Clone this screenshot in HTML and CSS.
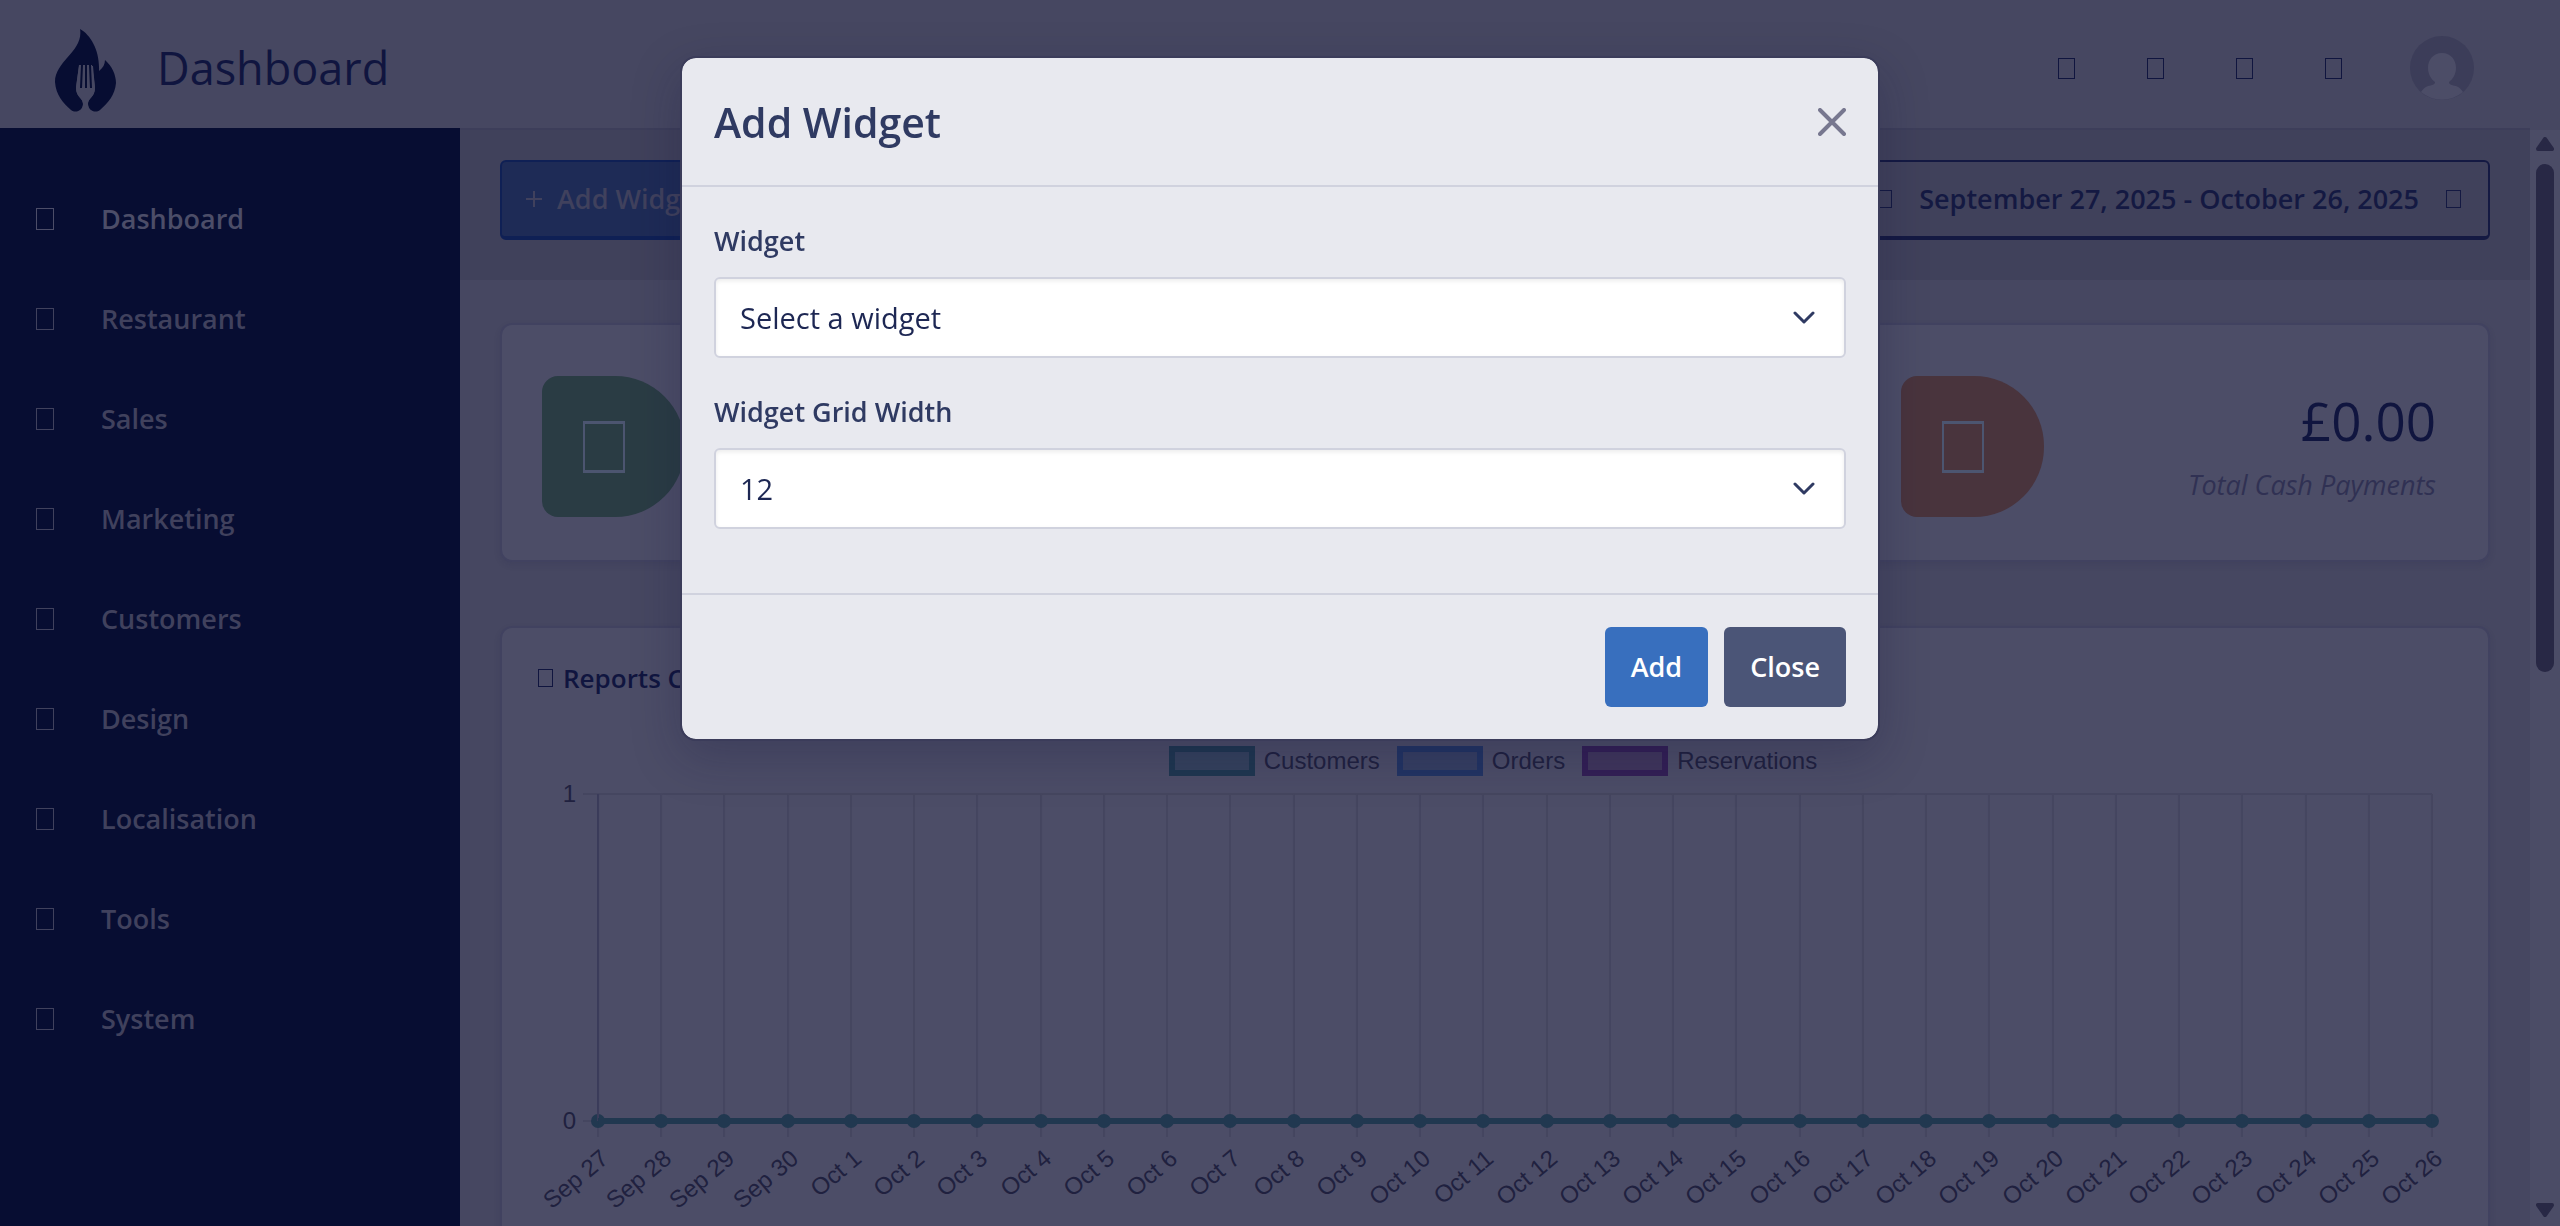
FILE: index.html
```html
<!DOCTYPE html>
<html lang="en">
<head>
<meta charset="utf-8">
<title>Dashboard</title>
<link rel="stylesheet" href="styles.css">
</head>
<body>
<header class="topbar">
  <a class="logo" href="#" aria-label="Home">
    <svg viewBox="0 0 62 83" width="62" height="83">
      <path class="flame" d="M25 0C36 6 45 22 44 42C48 39 50 35 50 31C57 37 61 46 61 54C60 66 53 74 45 81C40 85 33 81 33 75C33 68 40 69 40 58L37 36H24L21 58C21 69 28 68 28 75C28 81 21 85 16 81C8 74 1 66 0 53C0 32 29 22 25 0Z"/>
      <path class="fork" d="M24 37H38L40 59C40 68 33 69 33 75C33 78 34 80 36 83H25C27 80 28 78 28 75C28 69 21 68 21 59Z"/>
      <path class="slots" d="M27 36L26 59M31 36V59M35 36L36 59"/>
    </svg>
  </a>
  <h1 class="page-title">Dashboard</h1>
  <nav class="top-actions" aria-label="Shortcuts">
    <a href="#" aria-label="Storefront"><span class="glyph glyph-top"></span></a>
    <a href="#" aria-label="Settings"><span class="glyph glyph-top"></span></a>
    <a href="#" aria-label="Activity"><span class="glyph glyph-top"></span></a>
    <a href="#" aria-label="Locations"><span class="glyph glyph-top"></span></a>
  </nav>
  <a class="avatar" href="#" aria-label="Account">
    <svg viewBox="0 0 64 64" width="64" height="64">
      <circle class="avatar-bg" cx="32" cy="32" r="32"/>
      <path class="avatar-fg" d="M32 17C23 17 18 24 18 32C18 38 21 43 25 46C25 49 22 49 18 50C15 51 13 53 11 56A32 32 0 0 0 53 56C51 53 49 51 46 50C42 49 39 49 39 46C43 43 46 38 46 32C46 24 41 17 32 17Z"/>
    </svg>
  </a>
</header>
<div class="shell">
  <nav class="sidebar" aria-label="Main">
    <a class="nav-link active" href="#"><span class="glyph glyph-nav"></span>Dashboard</a>
    <a class="nav-link" href="#"><span class="glyph glyph-nav"></span>Restaurant</a>
    <a class="nav-link" href="#"><span class="glyph glyph-nav"></span>Sales</a>
    <a class="nav-link" href="#"><span class="glyph glyph-nav"></span>Marketing</a>
    <a class="nav-link" href="#"><span class="glyph glyph-nav"></span>Customers</a>
    <a class="nav-link" href="#"><span class="glyph glyph-nav"></span>Design</a>
    <a class="nav-link" href="#"><span class="glyph glyph-nav"></span>Localisation</a>
    <a class="nav-link" href="#"><span class="glyph glyph-nav"></span>Tools</a>
    <a class="nav-link" href="#"><span class="glyph glyph-nav"></span>System</a>
  </nav>
  <main class="content">
    <div class="toolbar">
      <button class="tool-btn tool-primary" type="button">
        <svg viewBox="0 0 18 18" width="18" height="18"><path d="M9 1V17M1 9H17"/></svg>
        <span>Add Widget</span>
      </button>
      <button class="tool-btn tool-outline" type="button">
        <span class="glyph glyph-small"></span>
        <span>September 27, 2025 - October 26, 2025</span>
        <span class="glyph glyph-small"></span>
      </button>
    </div>
    <div class="widgets">
      <section class="card stat">
        <div class="stat-icon green"><span class="glyph glyph-stat"></span></div>
      </section>
      <section class="card stat"></section>
      <section class="card stat">
        <div class="stat-icon orange"><span class="glyph glyph-stat"></span></div>
        <div class="stat-text">
          <span class="stat-value">£0.00</span>
          <span class="stat-label">Total Cash Payments</span>
        </div>
      </section>
      <section class="card report">
        <h2 class="report-title"><span class="glyph glyph-small"></span>Reports Chart</h2>
        <div class="legend">
          <span class="legend-item"><i class="swatch teal"></i>Customers</span>
          <span class="legend-item"><i class="swatch blue"></i>Orders</span>
          <span class="legend-item"><i class="swatch purple"></i>Reservations</span>
        </div>
        <svg class="chart" id="chart" viewBox="0 0 1930 460" role="img" aria-label="Reports by day"></svg>
      </section>
    </div>
  </main>
  <div class="scrollbar" aria-hidden="true">
    <svg viewBox="0 0 18 14" width="18" height="14"><path d="M9 2L16 12H2Z"/></svg>
    <div class="thumb"></div>
    <svg viewBox="0 0 18 14" width="18" height="14"><path d="M2 2H16L9 12Z"/></svg>
  </div>
</div>
<div class="modal">
  <form class="dialog" role="dialog" aria-modal="true" aria-labelledby="dialog-title">
    <div class="dialog-head">
      <h2 class="dialog-title" id="dialog-title">Add Widget</h2>
      <button class="dialog-x" type="button" aria-label="Dismiss">
        <svg viewBox="0 0 28 28" width="28" height="28"><path d="M2 2L26 26M26 2L2 26"/></svg>
      </button>
    </div>
    <div class="dialog-body">
      <div class="field">
        <label for="widget">Widget</label>
        <div class="select-wrap">
          <select id="widget"><option>Select a widget</option></select>
          <svg viewBox="0 0 24 14" width="24" height="14"><path d="M3 2L12 11L21 2"/></svg>
        </div>
      </div>
      <div class="field">
        <label for="width">Widget Grid Width</label>
        <div class="select-wrap">
          <select id="width"><option>12</option></select>
          <svg viewBox="0 0 24 14" width="24" height="14"><path d="M3 2L12 11L21 2"/></svg>
        </div>
      </div>
    </div>
    <div class="dialog-foot">
      <button class="btn btn-primary" type="button">Add</button>
      <button class="btn btn-dark" type="button">Close</button>
    </div>
  </form>
</div>
<script src="chart.js"></script>
</body>
</html>
```
FILE: styles.css
```css
* { box-sizing: border-box; }

:root {
  --navy: #070d32;
  --panel: #464761;
  --card: #4c4d67;
  --ink: #10153f;
}

body {
  margin: 0;
  height: 100vh;
  overflow: hidden;
  display: flex;
  flex-direction: column;
  background: var(--panel);
  color: var(--ink);
  font-family: "Open Sans", "Noto Sans", sans-serif;
  font-size: 27px;
  line-height: 40px;
}

button, select { font: inherit; color: inherit; }
a { color: inherit; text-decoration: none; }
svg { display: block; flex: none; }

.glyph {
  display: inline-block;
  flex: none;
  border: 1px solid currentColor;
}
.glyph-nav { width: 18px; height: 22px; }
.glyph-top { width: 17px; height: 21px; }
.glyph-small { width: 15px; height: 18px; }
.glyph-stat {
  width: 42px;
  height: 52px;
  border-width: 3px 2px;
  color: #4c5570;
}

/* Top bar */
.topbar {
  flex: none;
  height: 128px;
  display: flex;
  align-items: center;
  padding: 0 86px 0 55px;
}
.logo { margin-top: 12px; }
.flame { fill: var(--navy); }
.fork { fill: var(--panel); }
.slots { fill: none; stroke: var(--navy); stroke-width: 2; }
.page-title {
  margin: 8px auto 0 40px;
  font-size: 45px;
  line-height: 60px;
  font-weight: 400;
}
.top-actions { display: flex; gap: 72px; margin: 8px 68px 0 0; }
.top-actions a { display: flex; }
.avatar { margin-top: 8px; }
.avatar-bg { fill: #3c3d59; }
.avatar-fg { fill: var(--card); }

.shell { flex: 1; min-height: 0; display: flex; }

/* Sidebar */
.sidebar {
  flex: none;
  width: 460px;
  padding: 41px 36px;
  background: var(--navy);
  color: #40415d;
  font-weight: 600;
}
.nav-link {
  height: 100px;
  display: flex;
  align-items: center;
  gap: 47px;
}
.nav-link.active { color: #4c4d68; }

/* Content */
.content {
  flex: 1;
  min-width: 0;
  overflow: hidden;
  border-top: 2px solid #3d3e5a;
}
.toolbar {
  height: 150px;
  display: flex;
  justify-content: space-between;
  align-items: flex-start;
  padding: 30px 40px;
  background: #40415b;
}
.tool-btn {
  height: 80px;
  display: flex;
  align-items: center;
  gap: 14px;
  padding: 0 23px;
  border: 2px solid;
  border-bottom-width: 4px;
  border-radius: 6px;
  background: none;
  font-weight: 600;
}
.tool-btn svg { fill: none; stroke: currentColor; stroke-width: 2; }
.tool-primary {
  background: #1e2b56;
  border-color: #0f2055;
  color: #40415d;
}
.tool-outline {
  gap: 27px;
  padding: 0 27px;
  border-color: #141942;
  color: #141942;
}

.widgets {
  display: grid;
  grid-template-columns: repeat(3, 1fr);
  gap: 64px 48px;
  padding: 43px 40px;
}
.card {
  background: var(--card);
  border: 2px solid #414260;
  border-radius: 12px;
  box-shadow: 0 3px 6px rgba(30, 31, 70, 0.12);
}
.stat {
  height: 239px;
  display: flex;
  justify-content: space-between;
  align-items: center;
  padding: 8px 52px 0 40px;
}
.stat-icon {
  width: 143px;
  height: 141px;
  padding-left: 41px;
  display: flex;
  align-items: center;
  border-radius: 16px 70px 70px 16px;
}
.green { background: #2a3c44; }
.orange { background: #49343d; }
.stat-text {
  display: flex;
  flex-direction: column;
  align-items: flex-end;
  gap: 12px;
}
.stat-value { font-size: 53px; line-height: 64px; }
.stat-label { font-style: italic; color: #303153; }

.report { grid-column: 1 / -1; padding: 30px 28px; }
.report-title {
  margin: 0;
  padding-left: 8px;
  display: flex;
  align-items: center;
  gap: 10px;
  font-size: 26px;
  line-height: 40px;
  font-weight: 600;
}
.legend {
  display: flex;
  justify-content: center;
  gap: 17px;
  margin-top: 48px;
  padding: 0 4px 1px 0;
  font: 24px/30px "Liberation Sans", Arial, sans-serif;
  color: #20213f;
}
.legend-item { display: flex; gap: 9px; }
.swatch { width: 86px; height: 30px; border: 6px solid; }
.teal { border-color: #1f3750; background: #35425d; }
.blue { border-color: #223463; background: #363f62; }
.purple { border-color: #331f55; background: #40365c; }

.chart {
  width: 100%;
  height: auto;
  font: 24px "Liberation Sans", Arial, sans-serif;
}
.chart text { fill: #20213f; text-anchor: end; }
.chart .grid { stroke: #454660; stroke-width: 2; }
.chart .axis { stroke: #3b3c5a; stroke-width: 2; }
.chart .series { stroke: #213850; stroke-width: 6; }
.chart circle { fill: #213850; }

/* Scrollbar */
.scrollbar {
  flex: none;
  width: 30px;
  margin-top: 2px;
  padding: 7px 0 9px;
  display: flex;
  flex-direction: column;
  align-items: center;
  background: #4b4c66;
}
.scrollbar path {
  fill: #282845;
  stroke: #282845;
  stroke-width: 4;
  stroke-linejoin: round;
}
.thumb {
  width: 18px;
  height: 47%;
  margin: 13px 0 auto;
  border-radius: 9px;
  background: #282845;
}

/* Dialog */
.modal {
  position: fixed;
  inset: 0;
  padding-top: 56px;
}
.dialog {
  width: 1200px;
  max-width: 94%;
  margin: 0 auto;
  border: 2px solid #3b3c5a;
  border-radius: 16px;
  background: #e8e9ef;
  background-clip: padding-box;
  color: #2f3a62;
  box-shadow: 0 16px 48px rgba(20, 21, 60, 0.25);
}
.dialog-head {
  height: 129px;
  display: flex;
  align-items: center;
  justify-content: space-between;
  padding: 0 32px;
  border-bottom: 2px solid #d0d2de;
}
.dialog-title { margin: 0; font-size: 41px; line-height: 56px; font-weight: 600; }
.dialog-x { padding: 0; border: 0; background: none; }
.dialog-x svg { fill: none; stroke: #77778f; stroke-width: 4; stroke-linecap: round; }
.dialog-body {
  display: flex;
  flex-direction: column;
  gap: 34px;
  padding: 34px 32px 64px;
}
.field { display: flex; flex-direction: column; gap: 16px; }
.field label { font-weight: 600; }
.select-wrap { display: grid; align-items: center; }
.select-wrap > * { grid-area: 1 / 1; }
.select-wrap select {
  appearance: none;
  width: 100%;
  height: 81px;
  padding: 0 72px 0 24px;
  border: 2px solid #d0d2de;
  border-radius: 6px;
  background: #fff;
  box-shadow: inset 0 2px 4px rgba(0, 0, 0, 0.08);
  color: #1d2753;
  font-size: 29px;
}
.select-wrap svg {
  justify-self: end;
  margin-right: 30px;
  pointer-events: none;
  fill: none;
  stroke: #2f3a62;
  stroke-width: 3;
  stroke-linecap: round;
  stroke-linejoin: round;
}
.dialog-foot {
  display: flex;
  justify-content: flex-end;
  gap: 16px;
  padding: 32px;
  border-top: 2px solid #d0d2de;
}
.btn {
  height: 80px;
  padding: 0 26px;
  border: 0;
  border-radius: 6px;
  color: #fff;
  font-weight: 600;
}
.btn-primary { background: #386fbe; }
.btn-dark { background: #4b5577; }
```
FILE: chart.js
```js
const days = [];
for (let d = 27; d <= 30; d++) days.push("Sep " + d);
for (let d = 1; d <= 26; d++) days.push("Oct " + d);

const left = 68;
const right = 1902;
const top1 = 17;
const zero = 344;
const step = (right - left) / (days.length - 1);

const line = (cls, x1, y1, x2, y2) =>
  `<line class="${cls}" x1="${x1}" y1="${y1}" x2="${x2}" y2="${y2}"/>`;

let out = line("grid", left - 15, top1, right, top1) + line("grid", left - 15, zero, right, zero);
days.forEach((day, i) => {
  const x = Math.round(left + i * step);
  out += line("grid", x, top1, x, zero + 16);
  out += `<circle cx="${x}" cy="${zero}" r="7"/>`;
  out += `<text transform="translate(${x + 12} ${zero + 40}) rotate(-40)">${day}</text>`;
});
out += line("axis", left, top1, left, zero);
out += line("series", left, zero, right, zero);
out += `<text x="46" y="${top1 + 8}">1</text><text x="46" y="${zero + 8}">0</text>`;
document.getElementById("chart").innerHTML = out;
```
